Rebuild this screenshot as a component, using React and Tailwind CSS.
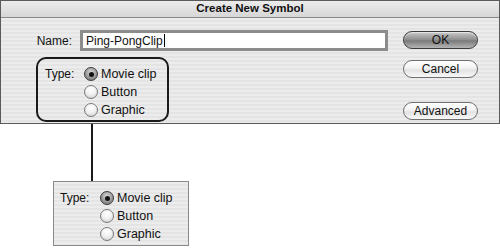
import React from "react";

const font = { fontFamily: '"Liberation Sans", Arial, sans-serif' };

function Radio({ checked }) {
  return (
    <span
      className={
        "relative inline-flex items-center justify-center w-[14px] h-[14px] rounded-full border shrink-0 " +
        (checked
          ? "border-[#3a3a3a] bg-[radial-gradient(circle_at_50%_35%,#d8d8d8_0%,#8a8a8a_70%,#6a6a6a_100%)]"
          : "border-[#7a7a7a] bg-[radial-gradient(circle_at_50%_30%,#ffffff_0%,#f0f0f0_50%,#c4c4c4_100%)]")
      }
    >
      {checked && <span className="w-[5px] h-[5px] rounded-full bg-[#111]" />}
    </span>
  );
}

function TypeGroup({ labelW, gap }) {
  const rows = [
    ["Movie clip", true],
    ["Button", false],
    ["Graphic", false],
  ];
  return (
    <div className="flex">
      <div className={labelW + " text-[12px] text-[#111] leading-[18px]"}>Type:</div>
      <div className="flex flex-col">
        {rows.map(([t, c]) => (
          <div key={t} className={"flex items-center h-[18px] " + gap}>
            <Radio checked={c} />
            <span className="text-[12.5px] text-[#111] leading-[18px]">{t}</span>
          </div>
        ))}
      </div>
    </div>
  );
}

function Btn({ children, primary }) {
  return (
    <div
      className={
        "w-[75px] h-[18px] rounded-full border flex items-center justify-center text-[12px] text-[#111] " +
        (primary
          ? "border-[#3c3c3c] bg-[linear-gradient(180deg,#c9c9c9_0%,#8c8c8c_50%,#7a7a7a_55%,#b5b5b5_100%)] shadow-[inset_0_1px_1px_rgba(255,255,255,0.6)]"
          : "border-[#6e6e6e] bg-[linear-gradient(180deg,#ffffff_0%,#f2f2f2_45%,#e2e2e2_55%,#f8f8f8_100%)]")
      }
    >
      {children}
    </div>
  );
}

export default function App() {
  return (
    <div className="w-[500px] h-[248px] bg-white overflow-hidden" style={font}>
      <div className="w-[500px] h-[124px] border border-[#5a5a5a] flex flex-col">
        <div className="h-[17px] shrink-0 border-b border-[#8a8a8a] bg-[linear-gradient(180deg,#ececec_0%,#d6d6d6_100%)] flex items-center justify-center text-[11.5px] font-bold text-[#111]">
          Create New Symbol
        </div>
        <div className="flex-1 flex bg-[repeating-linear-gradient(180deg,#ececec_0px,#ececec_2px,#e4e4e4_2px,#e4e4e4_4px)]">
          <div className="flex flex-col pt-[12px]">
            <div className="flex items-center">
              <div className="w-[71px] text-right text-[12px] text-[#111]">Name:</div>
              <div className="ml-[8px] w-[308px] h-[21px] border-[3px] border-[#8c8c8c] bg-white flex items-center pl-[3px] text-[12px] text-[#111]">
                Ping-PongClip<span className="w-[1px] h-[13px] bg-black ml-[1px]" />
              </div>
            </div>
            <div className="ml-[35px] mt-[6px] w-[133px] h-[65px] rounded-[10px] border-2 border-[#1a1a1a] pl-[7px] pt-[6px]">
              <TypeGroup labelW="w-[39px]" gap="gap-[3px]" />
            </div>
          </div>
          <div className="ml-auto mr-[21px] flex flex-col pt-[13px]">
            <Btn primary>OK</Btn>
            <div className="mt-[11px]">
              <Btn>Cancel</Btn>
            </div>
            <div className="mt-[24px]">
              <Btn>Advanced</Btn>
            </div>
          </div>
        </div>
      </div>
      <div className="ml-[91px] w-[2px] h-[57px] bg-[#1a1a1a]" />
      <div className="ml-[53px] w-[136px] h-[65px] border border-[#8a8a8a] bg-[repeating-linear-gradient(180deg,#ececec_0px,#ececec_2px,#e4e4e4_2px,#e4e4e4_4px)] pl-[6px] pt-[7px]">
        <TypeGroup labelW="w-[40px]" gap="gap-[3px]" />
      </div>
    </div>
  );
}
